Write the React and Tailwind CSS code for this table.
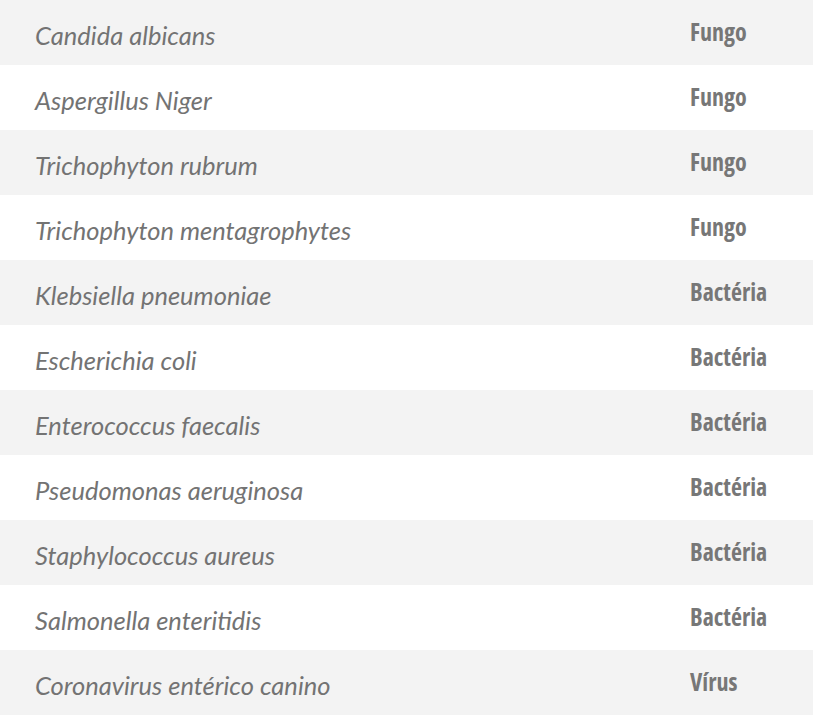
import React from "react";

const rows = [
  { name: "Candida albicans", type: "Fungo" },
  { name: "Aspergillus Niger", type: "Fungo" },
  { name: "Trichophyton rubrum", type: "Fungo" },
  { name: "Trichophyton mentagrophytes", type: "Fungo" },
  { name: "Klebsiella pneumoniae", type: "Bactéria" },
  { name: "Escherichia coli", type: "Bactéria" },
  { name: "Enterococcus faecalis", type: "Bactéria" },
  { name: "Pseudomonas aeruginosa", type: "Bactéria" },
  { name: "Staphylococcus aureus", type: "Bactéria" },
  { name: "Salmonella enteritidis", type: "Bactéria" },
  { name: "Coronavirus entérico canino", type: "Vírus" },
];

const App = () => {
  return (
    <div className="w-[813px] bg-white">
      {rows.map((row, i) => (
        <div
          key={row.name}
          className={`grid grid-cols-[1fr_123px] items-center h-[65px] ${
            i % 2 === 0 ? "bg-[#f3f3f3]" : "bg-white"
          }`}
        >
          <div className="pl-[35px] pt-[6px] text-[25.5px] leading-none italic text-[#737373] font-['Lato',sans-serif]">
            {row.name}
          </div>
          <div className="pb-[2px] text-[24px] leading-none font-bold [font-stretch:condensed] text-[#777777] font-['Open_Sans',sans-serif]">
            {row.type}
          </div>
        </div>
      ))}
    </div>
  );
};

export default App;
